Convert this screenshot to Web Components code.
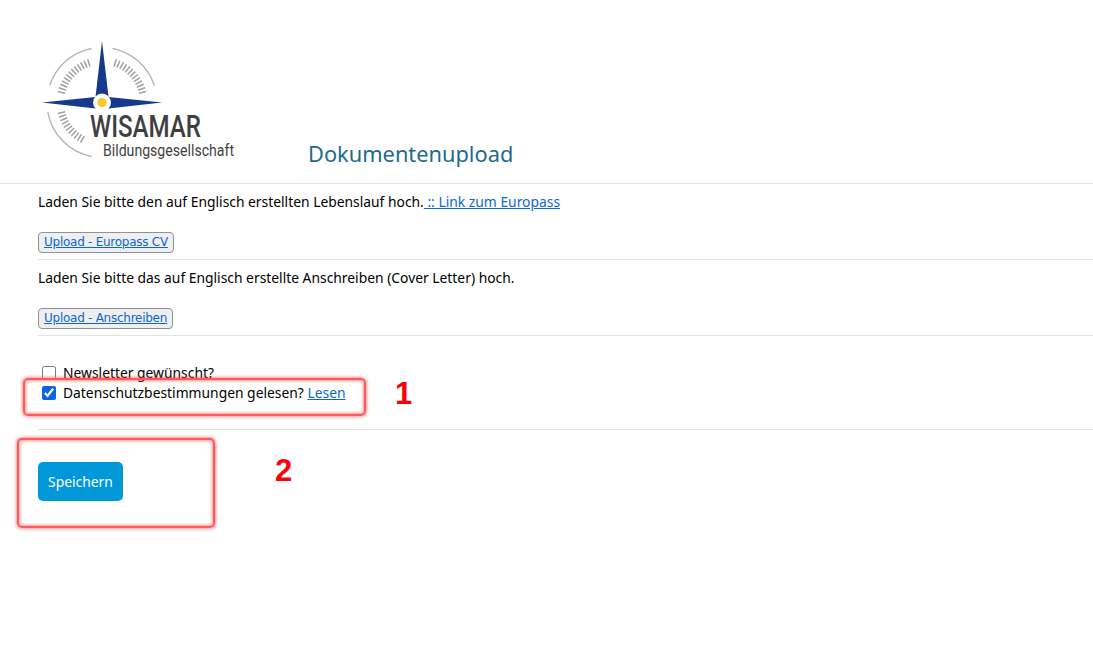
<!DOCTYPE html>
<html lang="de">
<head>
<meta charset="utf-8">
<title>Dokumentenupload</title>
<style>
  html, body { margin: 0; background: #fff; }
  body { font: 13.85px/20px "Noto Sans", "Open Sans", sans-serif; color: #000; position: relative; min-height: 663px; overflow: hidden; }
</style>
</head>
<body>
<upload-page>
  <page-header slot="header">Dokumentenupload</page-header>
  <upload-section label="Upload - Europass CV">Laden Sie bitte den auf Englisch erstellten Lebenslauf hoch.<a href="#" slot="link"> :: Link zum Europass</a></upload-section>
  <upload-section label="Upload - Anschreiben">Laden Sie bitte das auf Englisch erstellte Anschreiben (Cover Letter) hoch.</upload-section>
  <consent-block>
    <check-row>Newsletter gewünscht?</check-row>
    <check-row checked>Datenschutzbestimmungen gelesen? <a href="#" slot="link">Lesen</a></check-row>
  </consent-block>
  <save-button>Speichern</save-button>
</upload-page>
<annotation-mark number="1" style="--x:23px;--y:378px;--w:343px;--h:38px;--nx:395px;--ny:376px"></annotation-mark>
<annotation-mark number="2" style="--x:17px;--y:438px;--w:198px;--h:90px;--nx:275px;--ny:453px"></annotation-mark>

<script>
  // logo drawn in page coordinates minus the box origin (38, 36)
  class WisamarLogo extends HTMLElement {
    constructor() {
      super();
      this.attachShadow({mode: 'open'});
      const cx = 64, cy = 66.5;
      const tick = (deg) => {
        const a = deg * Math.PI / 180;
        const x1 = cx + 38 * Math.cos(a), y1 = cy + 38 * Math.sin(a);
        const x2 = cx + 45.5 * Math.cos(a), y2 = cy + 45.5 * Math.sin(a);
        return `M${x1.toFixed(1)} ${y1.toFixed(1)}L${x2.toFixed(1)} ${y2.toFixed(1)}`;
      };
      const arc = (from, to) => {
        const p = (d) => {
          const a = d * Math.PI / 180;
          return `${(cx + 55 * Math.cos(a)).toFixed(1)} ${(cy + 55 * Math.sin(a)).toFixed(1)}`;
        };
        return `M${p(from)}A55 55 0 0 1 ${p(to)}`;
      };
      let ticks = '';
      for (let d = 14; d <= 76; d += 4.8) {
        ticks += tick(180 + d) + tick(360 - d);
      }
      for (let d = 14; d <= 62; d += 4.8) {
        ticks += tick(180 - d);
      }
      this.shadowRoot.innerHTML = `
      <style>
        :host { display: block; width: 220px; height: 134px; }
        svg { display: block; }
        text { fill: #3f3f3f; font-family: "Roboto", "Liberation Sans", sans-serif; }
      </style>
      <svg width="220" height="134" viewBox="0 0 220 134" xmlns="http://www.w3.org/2000/svg">
        <path d="${arc(198, 259)} ${arc(281, 342)} ${arc(101, 170)}" fill="none" stroke="#b5b5b5" stroke-width="1.4"/>
        <path d="${ticks}" fill="none" stroke="#a0a0a0" stroke-width="1.5"/>
        <path fill="#16398c" d="M64 5L70.5 61L124 66.5L70.5 72.5L57.5 72.5L4 66.5L57.5 61Z"/>
        <circle cx="64" cy="66.5" r="9" fill="#fff"/>
        <circle cx="64" cy="66.5" r="4.6" fill="#fbc926"/>
        <text x="52" y="101" font-size="31" font-weight="500" textLength="111" lengthAdjust="spacingAndGlyphs">WISAMAR</text>
        <text x="65" y="120" font-size="16" textLength="131" lengthAdjust="spacingAndGlyphs">Bildungsgesellschaft</text>
      </svg>`;
    }
  }
  customElements.define('wisamar-logo', WisamarLogo);

  class PageHeader extends HTMLElement {
    constructor() {
      super();
      this.attachShadow({mode: 'open'}).innerHTML = `
      <style>
        :host { display: flex; align-items: flex-end; gap: 50px; padding: 36px 0 13px 38px; border-bottom: 1px solid #e2e2e2; }
        h1 { margin: 0 0 1px; font-size: 21.8px; line-height: 30px; font-weight: 400; color: #1f6b8c; }
      </style>
      <wisamar-logo></wisamar-logo>
      <h1><slot></slot></h1>`;
    }
  }
  customElements.define('page-header', PageHeader);

  class UploadSection extends HTMLElement {
    constructor() {
      super();
      this.attachShadow({mode: 'open'}).innerHTML = `
      <style>
        :host { display: block; height: 75px; border-bottom: 1px solid #e2e2e2; }
        p { margin: 0; padding-top: 8px; height: 39px; }
        ::slotted(a), a { color: #0b66d6; text-decoration: underline; }
        .btn {
          display: inline-block; box-sizing: border-box; height: 21px; padding: 0 5px;
          font: 12px/19px "DejaVu Sans", "Noto Sans", sans-serif; letter-spacing: -.26px;
          background: #efefef; border: 1px solid #8f8f9d; border-radius: 4px;
        }
      </style>
      <p><slot></slot><slot name="link"></slot></p>
      <span class="btn"><a href="#"></a></span>`;
      this.shadowRoot.querySelector('a').textContent = this.getAttribute('label');
    }
  }
  customElements.define('upload-section', UploadSection);

  class CheckRow extends HTMLElement {
    constructor() {
      super();
      this.attachShadow({mode: 'open'}).innerHTML = `
      <style>
        :host { display: flex; align-items: center; gap: 7px; height: 20px; padding-left: 4px; }
        input { width: 14px; height: 14px; margin: 0; accent-color: #0b63e5; }
        ::slotted(a) { color: #0b66d6; text-decoration: underline; }
      </style>
      <input type="checkbox">
      <span><slot></slot><slot name="link"></slot></span>`;
      this.shadowRoot.querySelector('input').checked = this.hasAttribute('checked');
    }
  }
  customElements.define('check-row', CheckRow);

  class ConsentBlock extends HTMLElement {
    constructor() {
      super();
      this.attachShadow({mode: 'open'}).innerHTML = `
      <style>
        :host { display: block; padding: 27px 0 26px; border-bottom: 1px solid #e2e2e2; }
      </style>
      <slot></slot>`;
    }
  }
  customElements.define('consent-block', ConsentBlock);

  class SaveButton extends HTMLElement {
    constructor() {
      super();
      this.attachShadow({mode: 'open'}).innerHTML = `
      <style>
        :host { display: block; margin-top: 32px; }
        button {
          display: block; width: 85px; height: 39px; padding: 0; border: 0; border-radius: 5px;
          background: #0098d9; color: #fff; font: 13.85px "Noto Sans", sans-serif;
        }
      </style>
      <button type="button"><slot></slot></button>`;
    }
  }
  customElements.define('save-button', SaveButton);

  class UploadPage extends HTMLElement {
    constructor() {
      super();
      this.attachShadow({mode: 'open'}).innerHTML = `
      <style>
        :host { display: block; }
        .body { margin-left: 38px; }
      </style>
      <slot name="header"></slot>
      <div class="body"><slot></slot></div>`;
    }
  }
  customElements.define('upload-page', UploadPage);

  // red markers lying over the screenshot
  class AnnotationMark extends HTMLElement {
    constructor() {
      super();
      this.attachShadow({mode: 'open'}).innerHTML = `
      <style>
        :host { display: block; position: absolute; left: 0; top: 0; pointer-events: none; }
        .box {
          position: absolute; left: var(--x); top: var(--y); width: var(--w); height: var(--h); box-sizing: border-box;
          border: 2px solid #ff5a5a; border-radius: 5px; box-shadow: 0 0 3px 1px rgba(255, 70, 70, .6), inset 0 0 3px 1px rgba(255, 70, 70, .6);
        }
        .num {
          position: absolute; left: var(--nx); top: var(--ny); color: #fb0007;
          font: 700 31px/36px "Liberation Sans", Arial, sans-serif;
        }
      </style>
      <div class="box"></div>
      <div class="num"></div>`;
      this.shadowRoot.querySelector('.num').textContent = this.getAttribute('number');
    }
  }
  customElements.define('annotation-mark', AnnotationMark);
</script>
</body>
</html>
